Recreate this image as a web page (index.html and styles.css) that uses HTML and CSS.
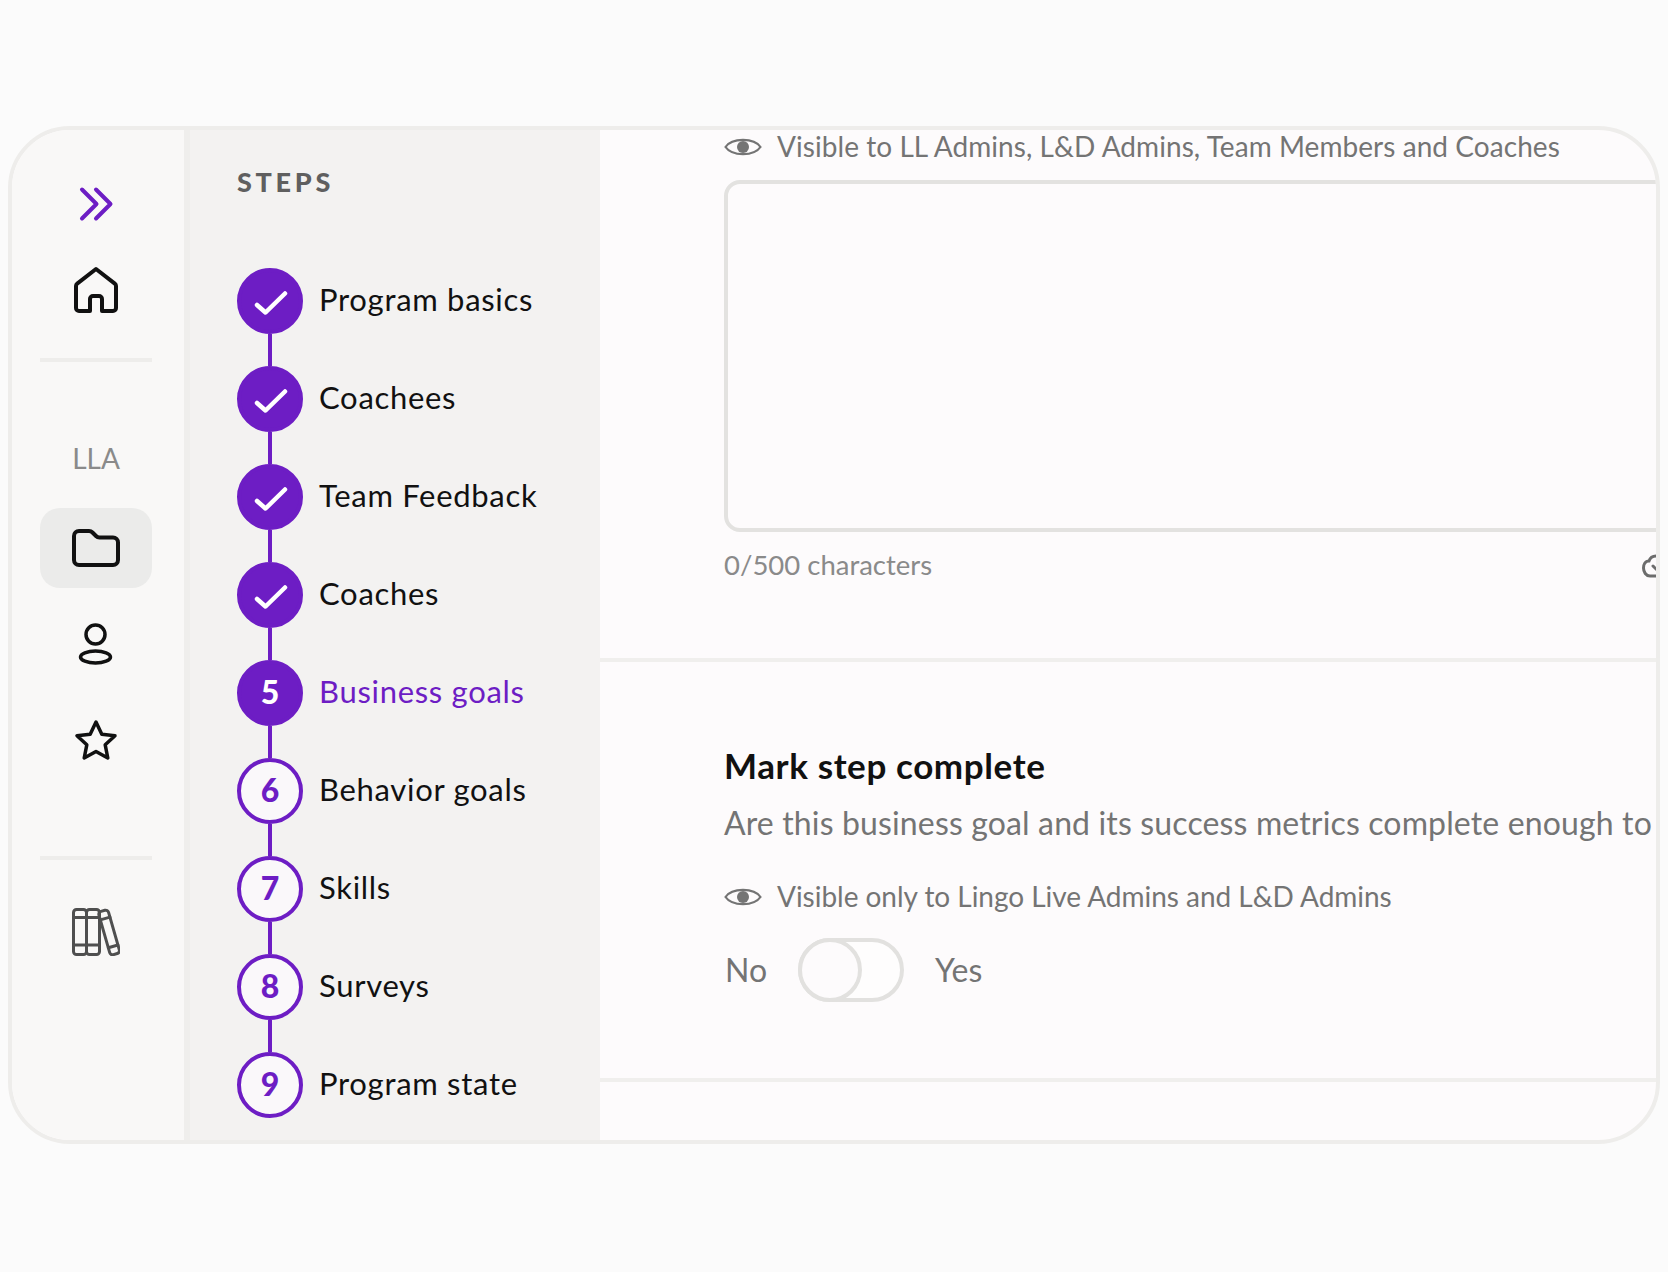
FILE: index.html
```html
<!DOCTYPE html>
<html lang="en">
<head>
  <meta charset="UTF-8">
  <meta name="viewport" content="width=device-width, initial-scale=1.0">
  <title>Business goals</title>
  <link rel="stylesheet" href="styles.css">
</head>
<body>

  <div class="frame">

    <!-- left nav -->
    <nav class="nav">
      <svg class="nav-icon icon-expand" viewBox="0 0 48 48"><path d="M10 9.500L24.500 24L10 38.500M24 9.500L38.500 24L24 38.500"/></svg>
      <svg class="nav-icon icon-home" viewBox="0 0 48 48"><path d="M18 45H7a3 3 0 0 1-3-3V20a3 3 0 0 1 1.200-2.400L24 3L42.800 17.600a3 3 0 0 1 1.200 2.400V42a3 3 0 0 1-3 3H30V33a3 3 0 0 0-3-3H21a3 3 0 0 0-3 3Z"/></svg>
      <div class="nav-line line-one"></div>
      <div class="nav-label">LLA</div>
      <div class="nav-active">
        <svg class="nav-icon" viewBox="0 0 48 48"><path d="M2 12a5 5 0 0 1 5-5H17a5 5 0 0 1 3.500 1.500L24 12a5 5 0 0 0 3.500 1.500H41a5 5 0 0 1 5 5V36a5 5 0 0 1-5 5H7a5 5 0 0 1-5-5Z"/></svg>
      </div>
      <svg class="nav-icon icon-person" viewBox="0 0 48 48"><circle cx="23.500" cy="12.500" r="9.500"/><ellipse cx="23.500" cy="35" rx="15" ry="6"/></svg>
      <svg class="nav-icon icon-star" viewBox="0 0 48 48"><path d="M24 5L29.800 17.200L43 18.800L33.200 27.800L35.800 41L24 34.500L12.200 41L14.800 27.800L5 18.800L18.200 17.200Z"/></svg>
      <div class="nav-line line-two"></div>
      <svg class="nav-icon icon-books" viewBox="0 0 48 48">
        <rect x="1.500" y="1.500" width="13" height="45" rx="3"/>
        <rect x="14.500" y="1.500" width="13" height="45" rx="3"/>
        <path d="M1.500 9.500H27.500M1.500 37H27.500"/>
        <g transform="rotate(-16 37 24)">
          <rect x="32" y="2" width="10" height="45" rx="3"/>
          <path d="M32 10H42M32 39H42"/>
        </g>
      </svg>
    </nav>

    <!-- steps -->
    <aside class="steps">
      <div class="steps-title">STEPS</div>
      <ol class="step-list">
        <li class="step">
          <span class="dot"><svg class="check" viewBox="0 0 66 66"><path d="M20 37L28.500 44.500L48 25.500"/></svg></span>
          <span class="step-name">Program basics</span>
        </li>
        <li class="step">
          <span class="dot"><svg class="check" viewBox="0 0 66 66"><path d="M20 37L28.500 44.500L48 25.500"/></svg></span>
          <span class="step-name">Coachees</span>
        </li>
        <li class="step">
          <span class="dot"><svg class="check" viewBox="0 0 66 66"><path d="M20 37L28.500 44.500L48 25.500"/></svg></span>
          <span class="step-name">Team Feedback</span>
        </li>
        <li class="step">
          <span class="dot"><svg class="check" viewBox="0 0 66 66"><path d="M20 37L28.500 44.500L48 25.500"/></svg></span>
          <span class="step-name">Coaches</span>
        </li>
        <li class="step current"><span class="dot">5</span><span class="step-name">Business goals</span></li>
        <li class="step todo"><span class="dot">6</span><span class="step-name">Behavior goals</span></li>
        <li class="step todo"><span class="dot">7</span><span class="step-name">Skills</span></li>
        <li class="step todo"><span class="dot">8</span><span class="step-name">Surveys</span></li>
        <li class="step todo last"><span class="dot">9</span><span class="step-name">Program state</span></li>
      </ol>
    </aside>

    <!-- main -->
    <main class="main">
      <section class="section-one">
        <div class="visible">
          <svg class="eye" viewBox="0 0 38 24"><path d="M1.500 12C8 2.500 30 2.500 36.500 12C30 21.500 8 21.500 1.500 12Z"/><circle cx="19" cy="12" r="6"/></svg>
          <span class="lift">Visible to LL Admins, L&amp;D Admins, Team Members and Coaches</span>
        </div>
        <div class="text-box"></div>
        <div class="count-row">
          <span class="lift-more">0/500 characters</span>
          <svg class="saved" viewBox="0 0 34 26"><path d="M14 3C11 3 8 5 7 8C3 8 1.500 12 1.500 15C1.500 19 4 23 8 23H30M11 13L18 20"/></svg>
        </div>
      </section>

      <section class="section-two">
        <h2>Mark step complete</h2>
        <p class="desc">Are this business goal and its success metrics complete enough to</p>
        <div class="visible visible-short">
          <svg class="eye" viewBox="0 0 38 24"><path d="M1.500 12C8 2.500 30 2.500 36.500 12C30 21.500 8 21.500 1.500 12Z"/><circle cx="19" cy="12" r="6"/></svg>
          <span class="lift">Visible only to Lingo Live Admins and L&amp;D Admins</span>
        </div>
        <div class="switch-row">
          <span class="lift">No</span>
          <div class="switch"><div class="knob"></div></div>
          <span class="lift">Yes</span>
        </div>
      </section>
    </main>

  </div>

</body>
</html>
```

FILE: styles.css
```css
* {
  box-sizing: border-box;
}
body {
  margin: 0;
  height: 1272px;
  padding: 126px 8px 0;
  overflow: hidden;
  background-color: #fbfbfb;
  font-family: "Lato", sans-serif;
}
.frame {
  display: flex;
  width: 1652px;
  height: 1018px;
  border: 4px solid #eeedeb;
  border-radius: 62px;
  overflow: hidden;
  background-color: #fdfbfc;
}

/* nav */
.nav {
  flex: none;
  width: 178px;
  display: flex;
  flex-direction: column;
  align-items: center;
  padding: 50px 4px 0 0;
  border-right: 6px solid #efeeec;
  background-color: #f9f8f7;
}
.nav-icon {
  flex: none;
  display: block;
  width: 48px;
  height: 48px;
  fill: none;
  stroke: #111;
  stroke-width: 4;
  stroke-linecap: round;
  stroke-linejoin: round;
}
.icon-expand {
  stroke: #6d1dc4;
}
.icon-home {
  margin-top: 38px;
}
.nav-line {
  width: 112px;
  height: 4px;
  background-color: #eeedeb;
}
.line-one {
  margin-top: 44px;
}
.nav-label {
  margin-top: 81px;
  margin-bottom: 1px;
  font-size: 28px;
  line-height: 30px;
  color: #8a8a8a;
}
.nav-active {
  display: flex;
  align-items: center;
  justify-content: center;
  flex: none;
  width: 112px;
  height: 80px;
  margin-top: 34px;
  border-radius: 20px;
  background-color: #ebebea;
}
.icon-person {
  margin-top: 34px;
  stroke-width: 3.500;
}
.icon-star {
  margin-top: 47px;
  stroke-width: 3.500;
}
.line-two {
  margin-top: 91px;
}
.icon-books {
  margin-top: 48px;
  stroke: #4f4f4f;
  stroke-width: 3;
}

/* steps */
.steps {
  flex: none;
  width: 410px;
  padding: 38px 0 0 47px;
  background-color: #f3f2f1;
}
.steps-title {
  font-size: 27px;
  line-height: 28px;
  font-weight: 900;
  letter-spacing: 3.700px;
  color: #5f5f5f;
}
.step-list {
  list-style: none;
  margin: 72px 0 0;
  padding: 0;
}
.step {
  position: relative;
  display: flex;
  align-items: center;
  gap: 16px;
  height: 66px;
  margin-bottom: 32px;
  font-size: 31px;
  letter-spacing: 0.700px;
  color: #111;
}
.step-name {
  padding-bottom: 4px;
}
.step::after {
  content: "";
  position: absolute;
  left: 31px;
  top: 66px;
  width: 4px;
  height: 32px;
  background-color: #6d1dc4;
}
.step.last::after {
  display: none;
}
.dot {
  flex: none;
  display: flex;
  align-items: center;
  justify-content: center;
  width: 66px;
  height: 66px;
  border: 4px solid #6d1dc4;
  border-radius: 50%;
  background-color: #6d1dc4;
  color: white;
  font-size: 32px;
  font-weight: 900;
  letter-spacing: 0;
}
.step.current .dot,
.step.todo .dot {
  padding-bottom: 4px;
}
.check {
  flex: none;
  width: 66px;
  height: 66px;
  fill: none;
  stroke: white;
  stroke-width: 4.500;
  stroke-linecap: round;
  stroke-linejoin: round;
}
.step.current {
  color: #6d1dc4;
}
.step.todo .dot {
  background-color: #faf8fa;
  color: #6d1dc4;
}

/* main */
.main {
  flex: 1;
  min-width: 0;
  overflow: hidden;
}
.section-one {
  padding: 0 0 75px 124px;
  border-bottom: 4px solid #f0efed;
}
.section-two {
  padding: 83px 0 76px 124px;
  border-bottom: 4px solid #f0efed;
}
.visible {
  display: flex;
  align-items: center;
  gap: 15px;
  height: 34px;
  font-size: 28px;
  letter-spacing: 0.060px;
  color: #747474;
  white-space: nowrap;
}
.visible-short {
  letter-spacing: -0.030px;
}
.lift {
  padding-bottom: 2px;
}
.lift-more {
  padding-bottom: 4px;
}
.eye {
  flex: none;
  width: 38px;
  height: 24px;
  fill: none;
  stroke: #747474;
  stroke-width: 2.200;
}
.eye circle {
  fill: #747474;
  stroke: none;
}
.text-box {
  width: 1100px;
  height: 352px;
  margin-top: 16px;
  border: 4px solid #e3e2e0;
  border-radius: 16px;
}
.count-row {
  display: flex;
  align-items: center;
  justify-content: space-between;
  width: 952px;
  height: 34px;
  margin-top: 17px;
  font-size: 27.500px;
  color: #8a8a8a;
}
.saved {
  flex: none;
  width: 34px;
  height: 26px;
  fill: none;
  stroke: #6c6c6c;
  stroke-width: 3;
  stroke-linecap: round;
}
h2 {
  margin: 0;
  font-size: 35px;
  line-height: 40px;
  font-weight: 700;
  letter-spacing: 0.600px;
  color: #111;
}
.desc {
  margin: 18px 0 37px;
  font-size: 32px;
  line-height: 40px;
  letter-spacing: 0.140px;
  color: #747474;
  white-space: nowrap;
}
.switch-row {
  display: flex;
  align-items: center;
  gap: 31px;
  margin-top: 24px;
  padding-left: 1px;
  font-size: 32px;
  color: #747474;
}
.switch {
  width: 106px;
  height: 64px;
  border: 4px solid #e2e1df;
  border-radius: 32px;
  background-color: #fefdfd;
}
.knob {
  width: 64px;
  height: 64px;
  margin: -4px;
  border: 4px solid #e2e1df;
  border-radius: 50%;
  background-color: #fdfbfc;
}
```
